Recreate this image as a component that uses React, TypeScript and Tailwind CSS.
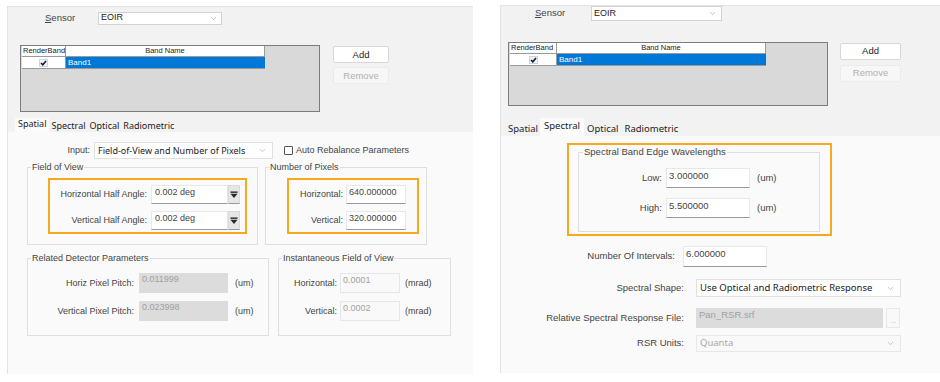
import { ChevronDown } from "lucide-react";

const Chevron = () => (
  <ChevronDown className="h-[9px] w-[9px] text-[#9a9a9a]" strokeWidth={1.5} />
);

const Check = () => (
  <svg width="9" height="8" viewBox="0 0 9 8">
    <rect x="0.5" y="0.5" width="8" height="7" fill="#eef4fb" stroke="#c7d6e8" />
    <path d="M2 4 L3.8 5.8 L7 2" fill="none" stroke="#1a1a1a" strokeWidth="1.6" />
  </svg>
);

const SpinIcon = () => (
  <svg width="8" height="8" viewBox="0 0 9 9">
    <rect x="0.5" y="0.5" width="8" height="1.6" fill="#2a2a2a" />
    <path d="M0.5 3 H8.5 L4.5 8 Z" fill="#2a2a2a" />
  </svg>
);

const SpinField = ({ value }: { value: string }) => (
  <div className="flex h-[19px] w-[89px]">
    <div className="flex-1 bg-white border border-[#e8e8e8] border-b-[#9a9a9a] pl-[3px] pt-[1px] text-[9px] leading-[11px] text-[#444]">
      {value}
    </div>
    <div className="w-[12px] bg-[#e6e6e6] border border-[#dadada] border-b-[#9a9a9a] flex items-center justify-center">
      <SpinIcon />
    </div>
  </div>
);

const Field = ({ value, className }: { value: string; className: string }) => (
  <div className={className}>{value}</div>
);

const BandTable = ({ wide }: { wide: boolean }) => (
  <div
    className={
      wide
        ? "w-[320px] h-[64px] bg-[#d9d9d9] border border-[#7c7c7c] pl-[1px]"
        : "w-[300px] h-[67px] bg-[#d9d9d9] border border-[#7c7c7c] pl-[1px]"
    }
  >
    <div className="flex h-[11px] font-['Liberation_Sans',Arial,sans-serif] text-[7.5px] leading-[10px] text-[#222]">
      <div className={wide ? "w-[47px] bg-white border-r border-b border-[#9a9a9a] pl-[1px] overflow-hidden whitespace-nowrap" : "w-[44px] bg-white border-r border-b border-[#9a9a9a] pl-[1px] overflow-hidden whitespace-nowrap"}>
        RenderBand
      </div>
      <div className={wide ? "w-[209px] bg-white border-r border-b border-[#9a9a9a] text-center" : "w-[199px] bg-white border-r border-b border-[#9a9a9a] text-center"}>
        Band Name
      </div>
    </div>
    <div className="flex h-[12px] font-['Liberation_Sans',Arial,sans-serif] text-[8px] leading-[11px]">
      <div className={wide ? "w-[47px] bg-white border-r border-b border-[#9a9a9a] flex items-center justify-center" : "w-[44px] bg-white border-r border-b border-[#9a9a9a] flex items-center justify-center"}>
        <Check />
      </div>
      <div className={wide ? "w-[209px] bg-[#0078d7] border-b border-[#9a9a9a] text-white pl-[2px]" : "w-[199px] bg-[#0078d7] border-b border-[#9a9a9a] text-white pl-[2px]"}>
        Band1
      </div>
    </div>
  </div>
);

const LeftPanel = () => (
  <div className="ml-[7px] mt-[6px] w-[466px] h-[368px] bg-[#f2f2f2] border-l border-t border-[#e3e3e3] flex flex-col font-['Liberation_Sans',Arial,sans-serif] text-[9px] text-[#444]">
    <div className="flex items-center pl-[37px] pt-[4px]">
      <span className="w-[53px] text-[9.5px]">
        <span className="underline">S</span>ensor
      </span>
      <div className="w-[124px] h-[13px] bg-white border border-[#d2d2d2] flex items-center justify-between pl-[2px] pr-[3px] text-[9px] text-[#222]">
        EOIR
        <Chevron />
      </div>
    </div>

    <div className="flex mt-[20px] pl-[12px]">
      <BandTable wide={false} />
      <div className="ml-[13px] flex flex-col">
        <div className="mt-[1px] w-[56px] h-[17px] bg-white border border-[#d8d8d8] rounded-[2px] flex items-center justify-center text-[9.5px] text-[#222]">
          Add
        </div>
        <div className="mt-[4px] w-[56px] h-[17px] bg-[#f7f7f7] border border-[#ebebeb] rounded-[2px] flex items-center justify-center text-[9.5px] text-[#b0b0b0]">
          Remove
        </div>
      </div>
    </div>

    <div className="flex items-end mt-[6px] pl-[7px] h-[14px] font-['Noto_Sans',sans-serif] text-[9px] text-[#222]">
      <div className="h-[14px] bg-[#fbfbfb] px-[3px] leading-[12px]">Spatial</div>
      <div className="px-[2px] leading-[13px]">Spectral</div>
      <div className="px-[2px] leading-[13px]">Optical</div>
      <div className="px-[2px] leading-[13px]">Radiometric</div>
    </div>

    <div className="flex-1 bg-[#fafafa] flex flex-col">
      <div className="flex items-center mt-[10px]">
        <span className="w-[82px] text-right">Input:</span>
        <div className="ml-[4px] w-[179px] h-[17px] bg-white border border-[#e0e0e0] flex items-center justify-between pl-[3px] pr-[5px] font-['Noto_Sans',sans-serif] text-[9px] text-[#222]">
          Field-of-View and Number of Pixels
          <Chevron />
        </div>
        <div className="ml-[11px] w-[9px] h-[9px] bg-white border border-[#555] rounded-[1px]" />
        <span className="ml-[3px]">Auto Rebalance Parameters</span>
      </div>

      <div className="flex mt-[3px]">
        <fieldset className="ml-[19px] w-[231px] h-[83px] border border-[#dedede]">
          <legend className="ml-[3px] px-[1px] leading-[11px]">Field of View</legend>
          <div className="ml-[20px] mt-[5px] w-[199px] h-[56px] border-2 border-[#f6a81e] pt-[5px]">
            <div className="flex items-center">
              <span className="w-[97px] text-right">Horizontal Half Angle:</span>
              <div className="ml-[4px]">
                <SpinField value="0.002 deg" />
              </div>
            </div>
            <div className="flex items-center mt-[7px]">
              <span className="w-[97px] text-right">Vertical Half Angle:</span>
              <div className="ml-[4px]">
                <SpinField value="0.002 deg" />
              </div>
            </div>
          </div>
        </fieldset>

        <fieldset className="ml-[7px] w-[162px] h-[83px] border border-[#dedede]">
          <legend className="ml-[3px] px-[1px] leading-[11px]">Number of Pixels</legend>
          <div className="ml-[21px] mt-[5px] w-[132px] h-[56px] border-2 border-[#f6a81e] pt-[5px]">
            <div className="flex items-center">
              <span className="w-[54px] text-right">Horizontal:</span>
              <Field
                value="640.000000"
                className="ml-[3px] w-[60px] h-[19px] bg-white border border-[#e8e8e8] border-b-[#9a9a9a] pl-[2px] pt-[1px] leading-[11px] text-[#444]"
              />
            </div>
            <div className="flex items-center mt-[7px]">
              <span className="w-[54px] text-right">Vertical:</span>
              <Field
                value="320.000000"
                className="ml-[3px] w-[60px] h-[19px] bg-white border border-[#e8e8e8] border-b-[#9a9a9a] pl-[2px] pt-[1px] leading-[11px] text-[#444]"
              />
            </div>
          </div>
        </fieldset>
      </div>

      <div className="flex mt-[8px]">
        <fieldset className="ml-[19px] w-[242px] h-[83px] border border-[#dedede]">
          <legend className="ml-[3px] px-[1px] leading-[11px]">Related Detector Parameters</legend>
          <div className="flex items-center mt-[9px]">
            <span className="w-[106px] text-right">Horiz Pixel Pitch:</span>
            <Field
              value="0.011999"
              className="ml-[5px] w-[89px] h-[20px] bg-[#dcdcdc] pl-[3px] pt-[1px] leading-[11px] text-[#a0a0a0]"
            />
            <span className="ml-[7px]">(um)</span>
          </div>
          <div className="flex items-center mt-[8px]">
            <span className="w-[106px] text-right">Vertical Pixel Pitch:</span>
            <Field
              value="0.023998"
              className="ml-[5px] w-[89px] h-[20px] bg-[#dcdcdc] pl-[3px] pt-[1px] leading-[11px] text-[#a0a0a0]"
            />
            <span className="ml-[7px]">(um)</span>
          </div>
        </fieldset>

        <fieldset className="ml-[9px] w-[173px] h-[83px] border border-[#dedede]">
          <legend className="ml-[3px] px-[1px] leading-[11px]">Instantaneous Field of View</legend>
          <div className="flex items-center mt-[9px]">
            <span className="w-[58px] text-right">Horizontal:</span>
            <Field
              value="0.0001"
              className="ml-[3px] w-[60px] h-[20px] bg-[#f9f9f9] border border-[#e6e6e6] pl-[2px] pt-[1px] leading-[11px] text-[#a0a0a0]"
            />
            <span className="ml-[5px]">(mrad)</span>
          </div>
          <div className="flex items-center mt-[8px]">
            <span className="w-[58px] text-right">Vertical:</span>
            <Field
              value="0.0002"
              className="ml-[3px] w-[60px] h-[20px] bg-[#f9f9f9] border border-[#e6e6e6] pl-[2px] pt-[1px] leading-[11px] text-[#a0a0a0]"
            />
            <span className="ml-[5px]">(mrad)</span>
          </div>
        </fieldset>
      </div>
    </div>
  </div>
);

const RightPanel = () => (
  <div className="ml-[27px] mt-[5px] w-[440px] h-[368px] bg-[#f2f2f2] border-l border-t border-[#e3e3e3] flex flex-col font-['Liberation_Sans',Arial,sans-serif] text-[9px] text-[#444]">
    <div className="flex items-center pl-[34px]">
      <span className="w-[56px] text-[9.5px]">
        <span className="underline">S</span>ensor
      </span>
      <div className="w-[131px] h-[15px] bg-white border border-[#d2d2d2] flex items-center justify-between pl-[2px] pr-[4px] text-[9px] text-[#222]">
        EOIR
        <Chevron />
      </div>
    </div>

    <div className="flex mt-[21px] pl-[7px]">
      <BandTable wide={true} />
      <div className="ml-[12px] flex flex-col">
        <div className="mt-[1px] w-[61px] h-[17px] bg-white border border-[#d8d8d8] rounded-[2px] flex items-center justify-center text-[9.5px] text-[#222]">
          Add
        </div>
        <div className="mt-[5px] w-[61px] h-[17px] bg-[#f7f7f7] border border-[#ebebeb] rounded-[2px] flex items-center justify-center text-[9.5px] text-[#b0b0b0]">
          Remove
        </div>
      </div>
    </div>

    <div className="flex items-end mt-[12px] pl-[5px] h-[18px] font-['Noto_Sans',sans-serif] text-[9.5px] text-[#222]">
      <div className="px-[2px] leading-[15px]">Spatial</div>
      <div className="h-[18px] bg-[#fbfbfb] px-[4px] leading-[16px]">Spectral</div>
      <div className="px-[3px] leading-[15px]">Optical</div>
      <div className="px-[3px] leading-[15px]">Radiometric</div>
    </div>

    <div className="flex-1 bg-[#fafafa] flex flex-col">
      <div className="ml-[66px] mt-[7px] w-[265px] h-[93px] border-2 border-[#f6a81e] pt-[1px]">
        <fieldset className="ml-[9px] w-[242px] h-[86px] border border-[#dedede]">
          <legend className="ml-[4px] px-[1px] leading-[12px] text-[9.5px]">Spectral Band Edge Wavelengths</legend>
          <div className="flex items-center mt-[10px]">
            <span className="w-[83px] text-right text-[9.5px]">Low:</span>
            <Field
              value="3.000000"
              className="ml-[4px] w-[84px] h-[20px] bg-white border border-[#e8e8e8] border-b-[#9a9a9a] pl-[2px] pt-[1px] leading-[11px] text-[9.5px] text-[#444]"
            />
            <span className="ml-[7px] text-[9.5px]">(um)</span>
          </div>
          <div className="flex items-center mt-[10px]">
            <span className="w-[83px] text-right text-[9.5px]">High:</span>
            <Field
              value="5.500000"
              className="ml-[4px] w-[84px] h-[20px] bg-white border border-[#e8e8e8] border-b-[#9a9a9a] pl-[2px] pt-[1px] leading-[11px] text-[9.5px] text-[#444]"
            />
            <span className="ml-[7px] text-[9.5px]">(um)</span>
          </div>
        </fieldset>
      </div>

      <div className="flex items-center mt-[10px]">
        <span className="w-[174px] text-right text-[9.5px]">Number Of Intervals:</span>
        <Field
          value="6.000000"
          className="ml-[8px] w-[84px] h-[21px] bg-white border border-[#e8e8e8] border-b-[#9a9a9a] pl-[2px] pt-[1px] leading-[11px] text-[9.5px] text-[#444]"
        />
      </div>

      <div className="flex items-center mt-[12px]">
        <span className="w-[183px] text-right text-[9.5px]">Spectral Shape:</span>
        <div className="ml-[12px] w-[205px] h-[18px] bg-white border border-[#e0e0e0] flex items-center justify-between pl-[3px] pr-[5px] font-['Noto_Sans',sans-serif] text-[9.5px] text-[#222]">
          Use Optical and Radiometric Response
          <Chevron />
        </div>
      </div>

      <div className="flex items-center mt-[11px]">
        <span className="w-[183px] text-right text-[9.5px]">Relative Spectral Response File:</span>
        <Field
          value="Pan_RSR.srf"
          className="ml-[12px] w-[187px] h-[20px] bg-[#dcdcdc] pl-[3px] pt-[1px] leading-[11px] text-[9.5px] text-[#a0a0a0]"
        />
        <div className="ml-[3px] w-[14px] h-[20px] bg-[#f9f9f9] border border-[#e8e8e8] flex items-end justify-center pb-[2px] text-[8px] leading-[8px] text-[#b0b0b0]">
          ...
        </div>
      </div>

      <div className="flex items-center mt-[7px]">
        <span className="w-[183px] text-right text-[9.5px]">RSR Units:</span>
        <div className="ml-[12px] w-[205px] h-[17px] bg-[#f9f9f9] border border-[#e8e8e8] flex items-center justify-between pl-[3px] pr-[5px] font-['Noto_Sans',sans-serif] text-[9.5px] text-[#a8a8a8]">
          Quanta
          <Chevron />
        </div>
      </div>
    </div>
  </div>
);

export default function App() {
  return (
    <div className="flex w-[940px] h-[382px] bg-white overflow-hidden">
      <LeftPanel />
      <RightPanel />
    </div>
  );
}
